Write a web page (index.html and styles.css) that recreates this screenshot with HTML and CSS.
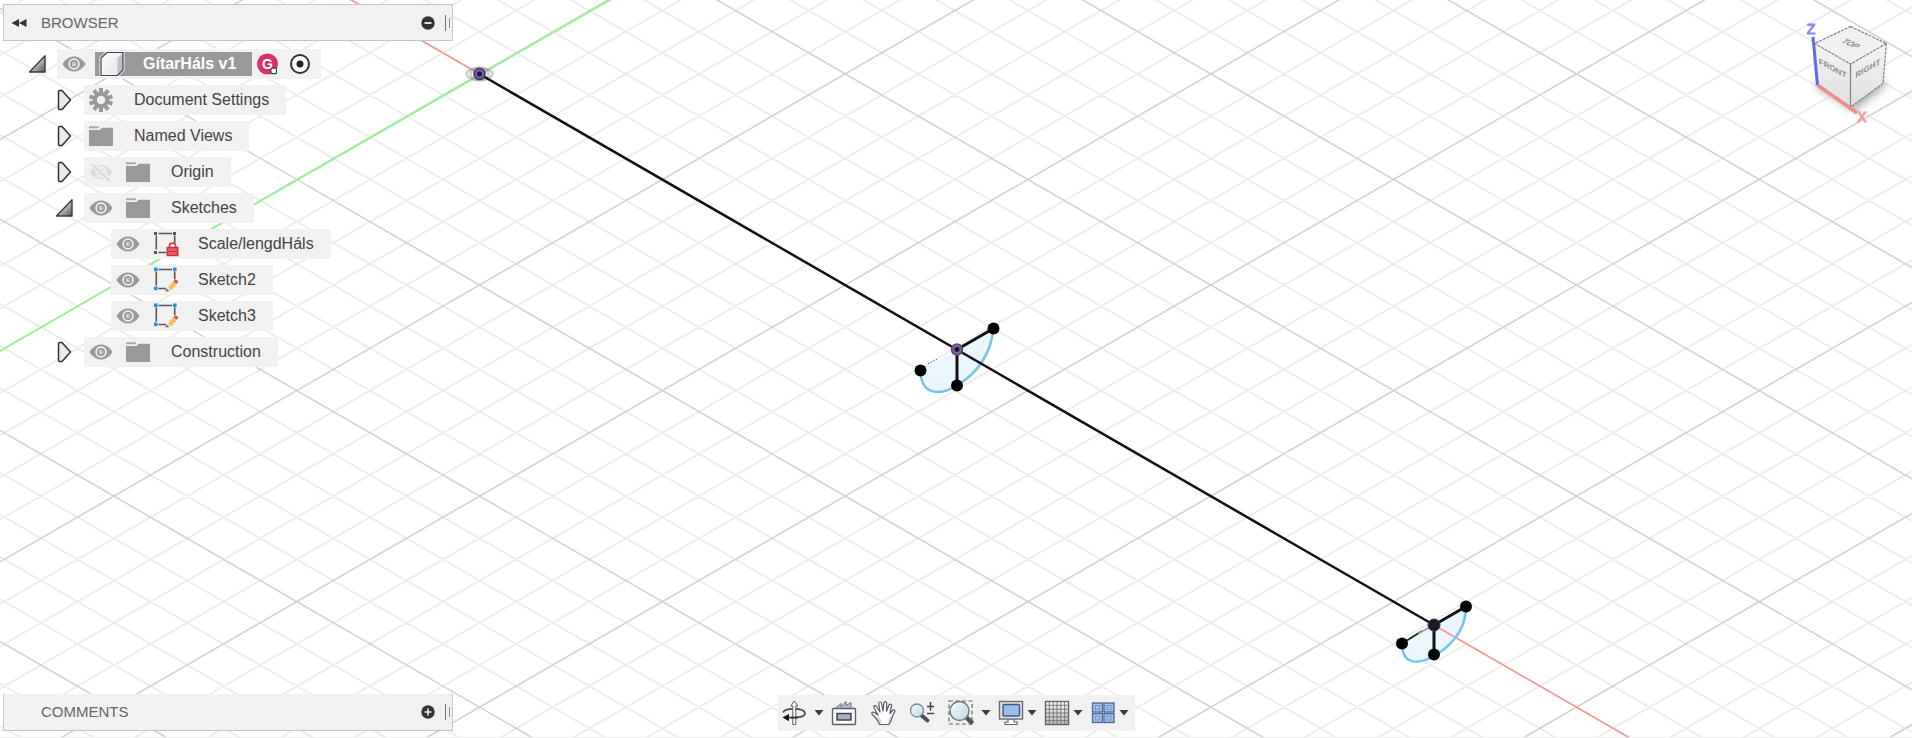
FILE: index.html
```html
<!DOCTYPE html>
<html lang="en">
<head>
<meta charset="utf-8">
<title>GítarHáls v1</title>
<link rel="stylesheet" href="styles.css">
</head>
<body>
<svg class="defs" aria-hidden="true">
  <defs>
    <linearGradient id="g-open" x1="0" y1="0" x2="1" y2="1"><stop offset="0.3" stop-color="#e8e8e8"/><stop offset="1" stop-color="#555"/></linearGradient>
    <linearGradient id="g-lens" x1="0" y1="0" x2="1" y2="1"><stop offset="0" stop-color="#fff"/><stop offset="1" stop-color="#b4d6de"/></linearGradient>
    <linearGradient id="g-cube" x1="0" y1="0" x2="1" y2="1"><stop offset="0" stop-color="#fff"/><stop offset="1" stop-color="#dfe0e6"/></linearGradient>
    <linearGradient id="g-grid" x1="0" y1="0" x2="0" y2="1"><stop offset="0" stop-color="#fff"/><stop offset="1" stop-color="#b9bcc8"/></linearGradient>
  </defs>
  <symbol id="i-open" viewBox="0 0 20 20"><path d="M1.500 18 17 1.800V18Z" fill="url(#g-open)" stroke="#3a3a3a" stroke-width="1.400" stroke-linejoin="round"/></symbol>
  <symbol id="i-closed" viewBox="0 0 16 22"><path d="M1.500 2.500Q1.500 1.500 2.500 1.500H5L13.500 11 5 20.500H2.500Q1.500 20.500 1.500 19.500Z" fill="#e9e9ec" stroke="#333" stroke-width="1.500" stroke-linejoin="round"/></symbol>
  <symbol id="i-eye" viewBox="0 0 24 24"><path d="M0.500 12C4 6.500 8 4.500 12 4.500S20 6.500 23.500 12C20 17.500 16 19.500 12 19.500S4 17.500 0.500 12Z" fill="#999"/><circle cx="12" cy="12" r="4.900" fill="none" stroke="#f0f0f0" stroke-width="1.700"/><circle cx="12" cy="12" r="2" fill="#f0f0f0"/><circle cx="12.300" cy="11.700" r="1" fill="#999"/></symbol>
  <symbol id="i-eye-off" viewBox="0 0 24 24"><path d="M1 12C4 7 8 5 12 5S20 7 23 12C20 17 16 19 12 19S4 17 1 12Z" fill="#dcdcdc"/><circle cx="12" cy="12" r="4.600" fill="none" stroke="#f1f1f1" stroke-width="2"/><path d="M3 3.500 21.500 21" stroke="#f1f1f1" stroke-width="5"/><path d="M3 4 21 21" stroke="#d8d8d8" stroke-width="2"/></symbol>
  <symbol id="i-folder" viewBox="0 0 24 24"><path d="M0 2.300H10.500L9.500 4.300H0Z" fill="#aaa"/><path d="M0 6H10.500L13 3.800H24V22H0Z" fill="#999"/></symbol>
  <symbol id="i-gear" viewBox="0 0 24 24"><g fill="#999"><rect x="10" y="0" width="4" height="24"/><rect x="10" y="0" width="4" height="24" transform="rotate(36 12 12)"/><rect x="10" y="0" width="4" height="24" transform="rotate(72 12 12)"/><rect x="10" y="0" width="4" height="24" transform="rotate(108 12 12)"/><rect x="10" y="0" width="4" height="24" transform="rotate(144 12 12)"/><circle cx="12" cy="12" r="8"/></g><circle cx="12" cy="12" r="4.200" fill="#f1f1f1"/></symbol>
  <symbol id="i-frame" viewBox="0 0 26 26"><g fill="none" stroke="#555" stroke-width="1.600"><path d="M5.500 2.500H19M3.300 4.500V18.500M21.700 4.500V12M5.500 21.500H13"/></g></symbol>
  <symbol id="i-sketch" viewBox="0 0 26 26"><use href="#i-frame"/><g fill="#2492e6"><rect x="1" y="0.500" width="3.600" height="3.600"/><rect x="20" y="0.500" width="3.600" height="3.600"/><rect x="1" y="19.500" width="3.600" height="3.600"/></g><path d="M14 21.500 16.500 24 14 24.500H12.500V23Z" fill="#777"/><path d="M15 20.500 20.500 14 24 17 18 23.500Z" fill="#fbbf50"/><path d="M20.500 14.200 22.500 12 25.500 14.500 23.500 16.800Z" fill="#f04848"/></symbol>
  <symbol id="i-locked" viewBox="0 0 26 26"><use href="#i-frame"/><g fill="#555"><rect x="1" y="1" width="3" height="3"/><rect x="20" y="1" width="3" height="3"/><rect x="1" y="20" width="3" height="3"/></g><path d="M16.500 17V14.500Q16.500 12.200 19.500 12.200T22.500 14.500V17" fill="none" stroke="#d13f47" stroke-width="1.700"/><rect x="14.200" y="16.500" width="10.600" height="8" fill="#e0616a" stroke="#c92f38" stroke-width="1.400"/><path d="M15 20.500H24" stroke="#c92f38"/></symbol>
  <symbol id="i-body" viewBox="0 0 26 26"><path d="M2 7 8 1.500H24V19L18.500 24.500H2Z" fill="url(#g-cube)" stroke="#fff" stroke-width="3" stroke-linejoin="round"/><path d="M18.500 7.500 24 1.800V19L18.500 24.500Z" fill="#bfc1c9"/><path d="M2 7 8 1.500H24V19L18.500 24.500H2Z" fill="none" stroke="#3c3f4b" stroke-width="1.200" stroke-linejoin="round"/></symbol>
  <symbol id="i-caret" viewBox="0 0 10 8"><path d="M0.500 1H9.500L5 6.500Z" fill="#3c3c3c"/></symbol>
</svg>

<main class="workspace">
  <svg class="canvas" viewBox="0 0 1912 738" preserveAspectRatio="xMidYMid slice" role="img" aria-label="Sketch canvas">
    <path id="grid-minor" class="grid-minor"/>
    <path id="grid-major" class="grid-major"/>
    <path class="profile" d="M920.500 371C921 398 943 396 960 384 980 371 991 351 993.500 329L957 350Z"/>
    <path class="profile" d="M1402 644C1402 667 1420 665 1437 655 1455 643 1466 628 1466 607L1434 625.500Z"/>
    <path class="axis-y" d="M0 351.500 611 0"/>
    <path class="axis-x" d="M350.500 0 479.500 74.500M1434 625.500 1629 738"/>
    <g fill="none" stroke="#8a8a8a" stroke-opacity="0.400" stroke-width="2.500"><ellipse cx="479.500" cy="74.500" rx="13" ry="6"/><ellipse cx="479.500" cy="74.500" rx="9" ry="6.500"/></g>
    <path class="arc" d="M920.500 371C921 398 943 396 960 384 980 371 991 351 993.500 329"/>
    <path class="arc" d="M1402 644C1402 667 1420 665 1437 655 1455 643 1466 628 1466 607"/>
    <path class="spine" d="M479.500 74.500 1434 625.500"/>
    <circle cx="479.500" cy="74.500" r="5.500" fill="#1c1426" stroke="#3c3350" stroke-width="1.500"/>
    <circle cx="479.500" cy="74.500" r="3.700" fill="none" stroke="#7a5cae" stroke-width="2.400"/>

    <path d="M928 364 937 360" stroke="#333" stroke-width="1" stroke-dasharray="1 2"/>
    <path class="edge" d="M993.500 329 957 350V386"/>
    <circle cx="993.500" cy="329" r="6"/><circle cx="920.500" cy="371" r="6"/><circle cx="957" cy="386" r="6"/>
    <circle cx="957" cy="350" r="5.500" fill="#1c1426" stroke="#555060" stroke-width="1.500"/>
    <circle cx="957" cy="350" r="3.700" fill="none" stroke="#7a5cae" stroke-width="2.400"/>

    <path d="M1402 644 1422 631.500" stroke="#222" stroke-width="2"/>
    <path d="M1418 634 1434 625.500" stroke="#999" stroke-width="1.500"/>
    <path class="edge" d="M1466 607 1434 625.500V655"/>
    <circle cx="1466" cy="607" r="6"/><circle cx="1402" cy="644" r="6"/><circle cx="1434" cy="655" r="6"/>
    <circle cx="1434" cy="625.500" r="6" fill="#1d1826" stroke="#3a3444"/>
  </svg>

  <div class="top">
    <aside class="browser">
      <header class="panel">
        <button class="plain collapse" aria-label="Collapse browser"><svg width="16" height="10" viewBox="0 0 16 10"><path d="M8 1V9L0.500 5ZM15.500 1V9L8 5Z" fill="#333"/></svg></button>
        <h2 class="title">BROWSER</h2>
        <button class="plain" aria-label="Hide browser"><svg class="sign" viewBox="0 0 14 14"><circle cx="7" cy="7" r="6.700" fill="#333"/><path d="M3.500 7H10.500" stroke="#f1f1f1" stroke-width="1.800"/></svg></button>
        <span class="grip"></span>
      </header>

      <ul class="tree">
        <li>
          <div class="row">
            <button class="plain twist" aria-label="Collapse document"><svg class="open"><use href="#i-open"/></svg></button>
            <div class="item root">
              <button class="plain" aria-label="Toggle visibility"><svg class="icon"><use href="#i-eye"/></svg></button>
              <button class="plain doc"><svg class="icon-lg"><use href="#i-body"/></svg><span>GítarHáls v1</span></button>
              <svg class="badge" viewBox="0 0 22 22" role="img" aria-label="G"><circle cx="10.500" cy="11" r="10.500" fill="#d6336c"/><text x="10.500" y="16" class="badge-text">G</text><rect x="14" y="15.200" width="5.500" height="5.500" rx="1" fill="#fff" stroke="#444" stroke-width="1.200"/></svg>
              <input class="activate" type="radio" name="active" checked aria-label="Activate component">
            </div>
          </div>
          <ul class="branch">
            <li><div class="row"><button class="plain twist" aria-label="Expand Document Settings"><svg class="closed"><use href="#i-closed"/></svg></button><div class="item"><svg class="icon"><use href="#i-gear"/></svg><button class="plain label">Document Settings</button></div></div></li>
            <li><div class="row"><button class="plain twist" aria-label="Expand Named Views"><svg class="closed"><use href="#i-closed"/></svg></button><div class="item"><svg class="icon"><use href="#i-folder"/></svg><button class="plain label">Named Views</button></div></div></li>
            <li><div class="row"><button class="plain twist" aria-label="Expand Origin"><svg class="closed"><use href="#i-closed"/></svg></button><div class="item"><button class="plain vis" aria-label="Show Origin"><svg class="icon"><use href="#i-eye-off"/></svg></button><svg class="icon"><use href="#i-folder"/></svg><button class="plain label">Origin</button></div></div></li>
            <li>
              <div class="row"><button class="plain twist" aria-label="Collapse Sketches"><svg class="open"><use href="#i-open"/></svg></button><div class="item"><button class="plain vis" aria-label="Hide Sketches"><svg class="icon"><use href="#i-eye"/></svg></button><svg class="icon"><use href="#i-folder"/></svg><button class="plain label">Sketches</button></div></div>
              <ul class="branch">
                <li><div class="row"><span class="twist"></span><div class="item"><button class="plain vis" aria-label="Hide Scale/lengdHáls"><svg class="icon"><use href="#i-eye"/></svg></button><svg class="icon-lg"><use href="#i-locked"/></svg><button class="plain label">Scale/lengdHáls</button></div></div></li>
                <li><div class="row"><span class="twist"></span><div class="item"><button class="plain vis" aria-label="Hide Sketch2"><svg class="icon"><use href="#i-eye"/></svg></button><svg class="icon-lg"><use href="#i-sketch"/></svg><button class="plain label">Sketch2</button></div></div></li>
                <li><div class="row"><span class="twist"></span><div class="item"><button class="plain vis" aria-label="Hide Sketch3"><svg class="icon"><use href="#i-eye"/></svg></button><svg class="icon-lg"><use href="#i-sketch"/></svg><button class="plain label">Sketch3</button></div></div></li>
              </ul>
            </li>
            <li><div class="row"><button class="plain twist" aria-label="Expand Construction"><svg class="closed"><use href="#i-closed"/></svg></button><div class="item"><button class="plain vis" aria-label="Hide Construction"><svg class="icon"><use href="#i-eye"/></svg></button><svg class="icon"><use href="#i-folder"/></svg><button class="plain label">Construction</button></div></div></li>
          </ul>
        </li>
      </ul>
    </aside>

    <svg class="viewcube" viewBox="0 0 96 112" role="img" aria-label="View cube">
      <defs>
        <filter id="soft" x="-30%" y="-30%" width="160%" height="160%"><feGaussianBlur stdDeviation="4"/></filter>
        <linearGradient id="g-face" x1="0" y1="0" x2="0" y2="1"><stop offset="0" stop-color="#f4f4f4"/><stop offset="1" stop-color="#e0e0e0"/></linearGradient>
      </defs>
      <path d="M14 70 50 52 88 68 54 95Z" fill="#777" opacity="0.600" filter="url(#soft)"/>
      <path d="M14.500 27.500 50.500 48V91L17.500 69Z" fill="url(#g-face)"/>
      <path d="M86.500 27.500 50.500 48V91L83 67.500Z" fill="url(#g-face)"/>
      <path d="M50.500 10.500 86.500 27.500 50.500 48 14.500 27.500Z" fill="#f0f0f0"/>
      <g fill="none" stroke="#808080" stroke-width="1.200"><path d="M50.500 10.500 86.500 27.500 50.500 48 14.500 27.500ZM86.500 27.500 83 67.500 50.500 91" stroke-dasharray="3 1"/><path d="M50.500 48V91L17.500 69"/></g>
      <path d="M13 21 17.500 69" stroke="#6464f2" stroke-width="3"/>
      <path d="M17.500 69 57 97" stroke="#f08c8c" stroke-width="3.500"/>
      <text class="face" transform="translate(32.500 52) skewY(28)" y="3">FRONT</text>
      <text class="face" transform="translate(68 52) skewY(-30)" y="3">RIGHT</text>
      <text class="face" transform="translate(51 27.500) rotate(26) skewX(-36)" y="3">TOP</text>
      <text class="axis-z-name" x="11" y="18">Z</text>
      <text class="axis-x-name" x="62" y="106">X</text>
    </svg>
  </div>

  <footer class="bottom">
    <section class="panel comments">
      <h2 class="title">COMMENTS</h2>
      <button class="plain" aria-label="Show comments"><svg class="sign" viewBox="0 0 14 14"><circle cx="7" cy="7" r="6.700" fill="#333"/><path d="M3.500 7H10.500M7 3.500V10.500" stroke="#f1f1f1" stroke-width="1.600"/></svg></button>
      <span class="grip"></span>
    </section>

    <nav class="toolbar" aria-label="Navigation">
      <button class="plain tool wide" aria-label="Orbit"><svg class="icon-lg" viewBox="0 0 26 26"><path d="M2 12.500C3 9 10 8.800 13 8.800 20 8.800 24 10.500 24 13.500S18 18 7 17.500" fill="none" stroke="#4a4a4a" stroke-width="1.700"/><path d="M11.800 24.500V6H9.800L13.300 1 16.800 6H14.800V24.500Z" fill="#fff" stroke="#5a5a5a" stroke-width="1"/><path d="M10 17.600H17" stroke="#333" stroke-width="1.900"/><path d="M8 14V21.200L1.500 17.600Z" fill="#111"/></svg><svg class="caret"><use href="#i-caret"/></svg></button>
      <button class="plain tool" aria-label="Look At"><svg class="icon-lg" viewBox="0 0 26 26"><path d="M4 8.500 10 3.500V7L15 1.500V5.500L20 2.500V8.500Z" fill="#b9c2d0" stroke="#6a707c" stroke-width="1"/><rect x="1.500" y="8.500" width="23" height="16" rx="1" fill="#fff" stroke="#5a5f6a" stroke-width="1.400"/><rect x="6" y="13.500" width="14" height="6.500" fill="#a5adbb" stroke="#3a3e48" stroke-width="1.400"/></svg></button>
      <button class="plain tool" aria-label="Pan"><svg class="icon-lg" viewBox="0 0 26 26"><path d="M9.500 24.500C8.500 20 5 17 2 14 1 12.500 3 11.500 4.500 12.500L8 15 4 7.500C3.300 5.500 5.500 5 6.500 6.500L10 12 8.800 3.500C8.800 1.500 11.200 1.500 11.600 3.500L13 11 14 2.800C14.300 1 16.700 1.200 16.700 3.200L16.500 11.300 19 5C20 3.300 22 4.200 21.500 6L19.800 13.500 22.500 10.500C24 9.300 25.500 10.500 24.500 12.200 22 15.500 22 20 19 24.500Z" fill="#fff" stroke="#555a63" stroke-width="1.200" stroke-linejoin="round"/><path d="M11 23.500Q9.500 19 8 16.500M18 23.500Q20 19 20.500 16" fill="none" stroke="#d5d5da" stroke-width="1.500"/></svg></button>
      <button class="plain tool" aria-label="Zoom"><svg class="icon-lg" viewBox="0 0 26 26"><path d="M12 15 18.500 20.500" stroke="#4c5260" stroke-width="4" stroke-linecap="round"/><circle cx="8" cy="10.500" r="6.500" fill="url(#g-lens)" stroke="#7b8590" stroke-width="1.300"/><path d="M18 6.500H25M21.500 2V10.500M18 13.500H25" stroke="#444" stroke-width="1.500"/></svg></button>
      <button class="plain tool wide" aria-label="Fit"><svg class="icon-lg" viewBox="0 0 26 26"><rect x="1" y="1" width="23" height="23" fill="none" stroke="#666" stroke-width="1.200" stroke-dasharray="4 2.500"/><path d="M18 17 24.500 23.500" stroke="#555" stroke-width="4.500"/><circle cx="11.500" cy="11" r="9.500" fill="url(#g-lens)" stroke="#6d757f" stroke-width="1.400"/></svg><svg class="caret"><use href="#i-caret"/></svg></button>
      <button class="plain tool split" aria-label="Display Settings"><svg class="icon-lg" viewBox="0 0 26 26"><path d="M10 19H16V22H19V24.500H7V22H10Z" fill="#fff" stroke="#666" stroke-width="1.200"/><rect x="1.500" y="1.500" width="23" height="17.500" fill="#e4e4e4" stroke="#666b75" stroke-width="1.400"/><rect x="5" y="4.500" width="16.500" height="11.500" rx="1" fill="#9cbde6" stroke="#3c5785" stroke-width="1.400"/></svg><svg class="caret"><use href="#i-caret"/></svg></button>
      <button class="plain tool split" aria-label="Grid and Snaps"><svg class="icon-lg" viewBox="0 0 26 26"><rect x="1.500" y="1.500" width="23" height="23" fill="url(#g-grid)" stroke="#666" stroke-width="1.400"/><path d="M5.300 2V24M9.200 2V24M13 2V24M16.800 2V24M20.700 2V24M2 5.300H24M2 9.200H24M2 13H24M2 16.800H24M2 20.700H24" stroke="#777" stroke-width="1"/></svg><svg class="caret"><use href="#i-caret"/></svg></button>
      <button class="plain tool split" aria-label="Viewports"><svg class="icon-lg" viewBox="0 0 26 26"><g fill="#a3c0e6" stroke="#4d6796" stroke-width="1.300"><rect x="2.500" y="3" width="10" height="9"/><rect x="14" y="3" width="10" height="9"/><rect x="2.500" y="13.500" width="10" height="9"/><rect x="14" y="13.500" width="10" height="9"/></g><g fill="none" stroke="#7393c4"><rect x="5.500" y="5.500" width="4" height="4"/><rect x="17" y="5.500" width="4" height="4"/><rect x="5.500" y="16" width="4" height="4"/><rect x="17" y="16" width="4" height="4"/></g></svg><svg class="caret"><use href="#i-caret"/></svg></button>
    </nav>
  </footer>
</main>
<script src="grid.js"></script>
</body>
</html>
```
FILE: styles.css
```css
* { box-sizing: border-box; }

body {
  margin: 0;
  background: #fff;
  font-family: "Liberation Sans", Arial, sans-serif;
  font-size: 16px;
  color: #444;
}

ul { list-style: none; margin: 0; padding: 0; }
svg { display: block; flex: none; }
.defs { position: absolute; width: 0; height: 0; }

.plain {
  display: flex;
  align-items: center;
  border: 0;
  padding: 0;
  background: none;
  color: inherit;
  font: inherit;
}

.workspace {
  position: relative;
  display: flex;
  flex-direction: column;
  justify-content: space-between;
  min-height: 100vh;
  padding: 4px 0 6px 3px;
  border-bottom: 1px solid #eee;
  overflow: hidden;
}

.canvas { position: absolute; inset: 0; width: 100%; height: 100%; }
.grid-minor { fill: none; stroke: #ededed; stroke-width: 2; }
.grid-major { fill: none; stroke: #d0d0d0; stroke-width: 1.5; }
.axis-x { fill: none; stroke: #ff9494; stroke-width: 1.5; }
.axis-y { fill: none; stroke: #84fc84; stroke-width: 1.5; }
.spine { fill: none; stroke: #1a0f10; stroke-width: 2.5; }
.edge { fill: none; stroke: #111; stroke-width: 3; }
.arc { fill: none; stroke: #74c4ec; stroke-width: 2.5; }
.profile { fill: #e6f3fb; fill-opacity: 0.8; }

.top, .bottom { position: relative; }
.top { display: flex; justify-content: space-between; align-items: flex-start; }
.browser { width: 450px; }

.panel {
  display: flex;
  align-items: center;
  height: 37px;
  padding: 0 2px 0 7px;
  background: #f1f1f1;
  border: 1px solid #c6c6c6;
}
.collapse { width: 30px; }
.title { flex: 1; margin: 0; font-size: 15px; line-height: 16px; font-weight: 400; color: #666; }
.sign { width: 14px; height: 14px; }
.grip {
  width: 5px;
  height: 16px;
  margin-left: 10px;
  border-left: 1px solid #777;
  background: linear-gradient(#888, #888) right center / 1px 10px no-repeat;
}

.tree { padding: 8px 0 0 25px; }
.branch { padding-left: 27px; }
.row { display: flex; align-items: center; height: 30px; margin-bottom: 6px; }
.twist { width: 29px; flex: none; }
.open { width: 20px; height: 20px; }
.closed { width: 16px; height: 22px; margin-left: 2px; }
.item { display: flex; align-items: center; height: 30px; padding: 0 17px 0 5px; background: #f1f1f1; }
.root { padding-right: 11px; }
.icon { width: 24px; height: 24px; }
.icon-lg { width: 26px; height: 26px; }
.vis { margin-right: 13px; }
.label { margin-left: 21px; }
.icon-lg + .label { margin-left: 19px; }
.doc {
  gap: 18px;
  height: 24px;
  margin-left: 9px;
  padding: 0 16px 0 4px;
  background: #999;
  color: #fff;
  font-weight: 700;
}
.badge { width: 22px; height: 22px; margin-left: 5px; }
.badge-text { font-size: 14px; font-weight: 700; fill: #fff; text-anchor: middle; }
.activate {
  appearance: none;
  width: 20px;
  height: 20px;
  margin: 0 0 0 11px;
  border: 2px solid #333;
  border-radius: 50%;
  background: radial-gradient(circle, #222 3px, #fff 4px);
}

.viewcube { width: 96px; height: 112px; margin: 12px 16px 0 0; }
.face { font-size: 8px; font-weight: 700; fill: #8a8d90; text-anchor: middle; }
.axis-z-name, .axis-x-name { font-size: 14px; text-anchor: middle; }
.axis-z-name { fill: #8a8af7; stroke: #8a8af7; }
.axis-x-name { fill: #f79a9a; stroke: #f79a9a; }

.bottom { display: grid; grid-template-columns: 1fr auto 1fr; align-items: center; margin-left: -3px; }
.comments { width: 450px; margin-left: 3px; padding-left: 37px; border-top: 0; }
.toolbar { display: flex; align-items: center; gap: 7px; height: 36px; padding: 0 6px 0 3px; background: #f1f1f1; }
.tool { padding-right: 6px; }
.wide { gap: 7px; padding-right: 0; }
.split { gap: 3px; padding-right: 0; }
.caret { width: 10px; height: 8px; }
```
FILE: grid.js
```js
// Isometric ground grid: two families of parallel lines through the origin.
const origin = { x: 479.6, y: 74.4 };
const cell = { w: 73.12, h: 42.22 };
const slope = cell.h / cell.w;
let minor = "";
let major = "";
for (let i = -40; i <= 40; i++) {
  for (const s of [slope, -slope]) {
    const y0 = origin.y + i * cell.h - s * origin.x;
    const line = `M0 ${y0.toFixed(2)}L1912 ${(y0 + s * 1912).toFixed(2)}`;
    if (i % 5 === 0) major += line;
    else minor += line;
  }
}
document.getElementById("grid-minor").setAttribute("d", minor);
document.getElementById("grid-major").setAttribute("d", major);
```
